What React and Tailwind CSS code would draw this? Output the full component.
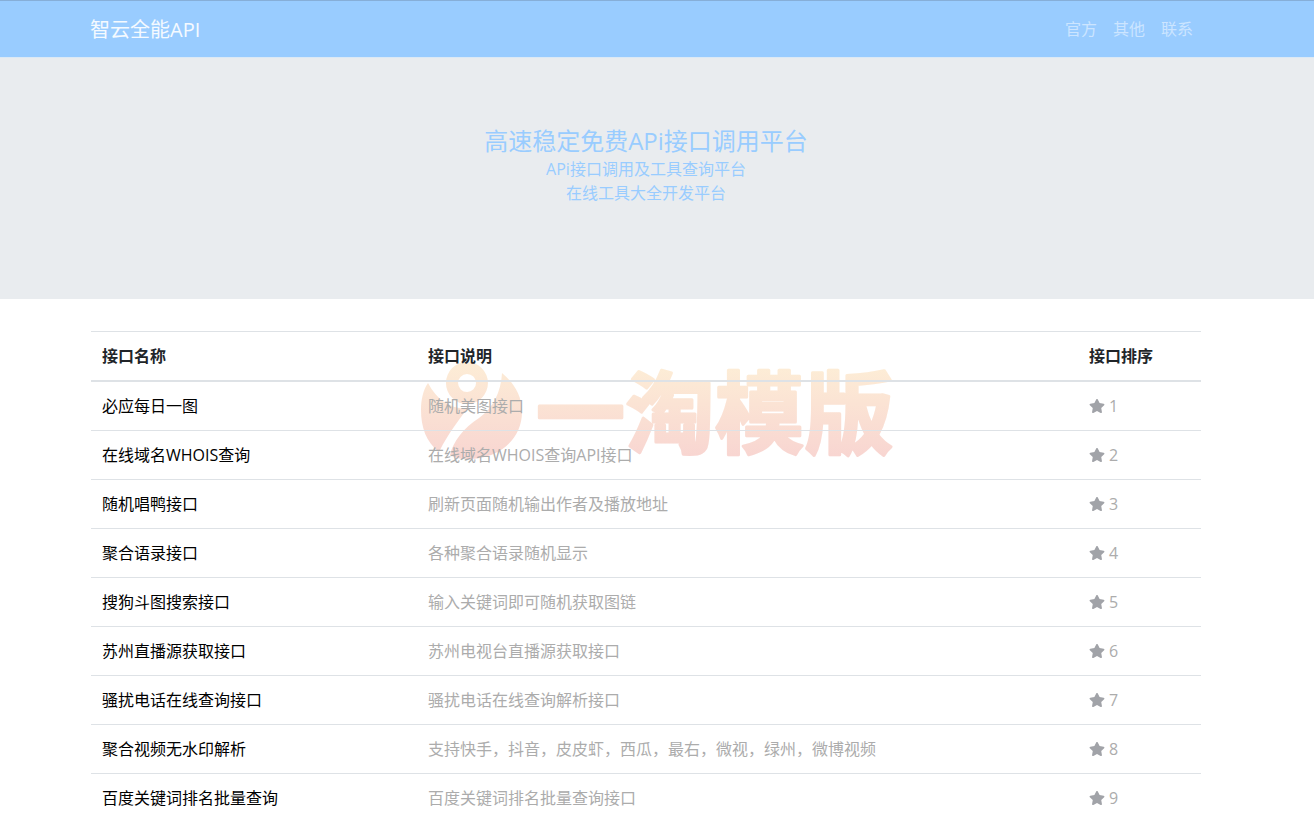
import { FaStar } from "react-icons/fa";

const rows = [
  ["必应每日一图", "随机美图接口"],
  ["在线域名WHOIS查询", "在线域名WHOIS查询API接口"],
  ["随机唱鸭接口", "刷新页面随机输出作者及播放地址"],
  ["聚合语录接口", "各种聚合语录随机显示"],
  ["搜狗斗图搜索接口", "输入关键词即可随机获取图链"],
  ["苏州直播源获取接口", "苏州电视台直播源获取接口"],
  ["骚扰电话在线查询接口", "骚扰电话在线查询解析接口"],
  ["聚合视频无水印解析", "支持快手，抖音，皮皮虾，西瓜，最右，微视，绿州，微博视频"],
  ["百度关键词排名批量查询", "百度关键词排名批量查询接口"],
];

function Watermark() {
  return (
    <div className="absolute left-[421px] top-[362px] flex pointer-events-none">
      <svg viewBox="0 0 102 100" className="w-[102px] h-[100px]">
        <defs>
          <linearGradient id="wg" gradientUnits="userSpaceOnUse" x1="0" y1="0" x2="0" y2="98">
            <stop offset="0" stopColor="#fdedd6" />
            <stop offset="1" stopColor="#f8d5d1" />
          </linearGradient>
        </defs>
        <path fillRule="evenodd" fill="url(#wg)" d="M46 0a21 21 0 1 1-.1 42 21 21 0 0 1 .1-42zm0 12a9 9 0 1 0 .1 18 9 9 0 0 0-.1-18z" />
        <path fill="url(#wg)" d="M7 21C16 38 28 46 46 47 38 58 28 70 18 90 5 80 0 65 0 48 0 38 2 28 7 21z" />
        <path fill="url(#wg)" d="M81 11C92 20 101 33 101 50 101 77 78 97 47 97 40 97 34 96 29 93 32 80 42 66 58 56 72 46 80 30 81 11z" />
      </svg>
      <svg viewBox="0 0 380 100" className="w-[380px] h-[100px] ml-[8px] overflow-visible">
        <defs>
          <linearGradient id="wt" gradientUnits="userSpaceOnUse" x1="0" y1="4" x2="0" y2="96">
            <stop offset="0" stopColor="#fdedd6" />
            <stop offset="1" stopColor="#f8d5d1" />
          </linearGradient>
        </defs>
        <text
          x="5"
          y="84"
          fontSize="89"
          fontWeight="700"
          letterSpacing="0.5"
          fontFamily="'Noto Sans CJK SC', sans-serif"
          fill="url(#wt)"
          stroke="url(#wt)"
          strokeWidth="3"
          strokeLinejoin="round"
        >
          一淘模版
        </text>
      </svg>
    </div>
  );
}

export default function App() {
  return (
    <div className="relative h-[820px] overflow-hidden bg-white text-[16px] leading-[24px] text-[#212529] font-['Open_Sans','Noto_Sans_CJK_SC',sans-serif]">
      <nav className="h-[58px] bg-[#99ccff] border-t border-b border-t-[#86aed8] border-b-[#dbe9f6] pl-[90px] pr-[113px] flex items-center justify-between">
        <span className="mt-[2px] text-[20px] leading-[30px] text-white/90">智云全能API</span>
        <div className="flex gap-[16px] pr-[8px] text-white/50">
          <span>官方</span>
          <span>其他</span>
          <span>联系</span>
        </div>
      </nav>
      <header className="h-[241px] bg-[#e9ecef] flex flex-col items-center pr-[22px] pt-[67px] text-[#99ccff]">
        <h1 className="text-[24px] leading-[32px] font-normal">高速稳定免费APi接口调用平台</h1>
        <p>APi接口调用及工具查询平台</p>
        <p>在线工具大全开发平台</p>
      </header>
      <Watermark />
      <main className="relative ml-[91px] w-[1110px] mt-[32px]">
        <div className="grid grid-cols-[326px_661px_123px] border-t border-[#dee2e6] border-b-2 font-bold">
          <div className="pl-[11px] pr-[12px] py-[12px]">接口名称</div>
          <div className="pl-[11px] pr-[12px] py-[12px]">接口说明</div>
          <div className="pl-[11px] pr-[12px] py-[12px]">接口排序</div>
        </div>
        {rows.map(([name, desc], i) => (
          <div key={name} className="grid grid-cols-[326px_661px_123px] border-b border-[#dee2e6]">
            <div className="pl-[11px] pr-[12px] py-[12px] text-black">{name}</div>
            <div className="pl-[11px] pr-[12px] py-[12px] text-[#acacac]">{desc}</div>
            <div className="pl-[11px] pr-[12px] py-[12px] flex items-center text-[#acacac]">
              <FaStar className="w-[16px] h-[16px] mr-[4px] shrink-0 text-[#a1a3a8]" />
              <span>{i + 1}</span>
            </div>
          </div>
        ))}
      </main>
    </div>
  );
}
